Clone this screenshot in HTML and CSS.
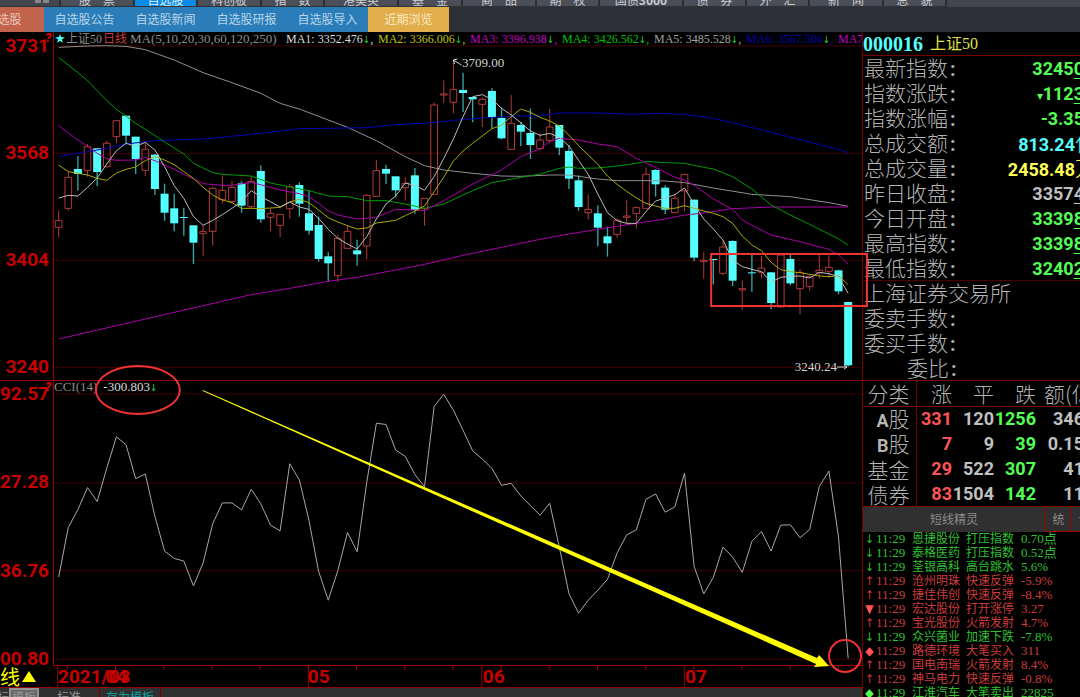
FILE: index.html
```html
<!DOCTYPE html>
<html lang="zh-CN">
<head>
<meta charset="utf-8">
<title>上证50 日线</title>
<link rel="stylesheet" href="styles.css">
</head>
<body>
<header class="menu">
  <button class="menu-item menu-grid" aria-label="应用"><i></i><i></i></button>
  <button class="menu-item w75">股　票</button>
  <button class="menu-item active">自选股</button>
  <button class="menu-item w64">科创板</button>
  <button class="menu-item">指　数</button>
  <button class="menu-item w75">港美英</button>
  <button class="menu-item w64">基　金</button>
  <button class="menu-item w75">商　品</button>
  <button class="menu-item">期　权</button>
  <button class="menu-item w84">国债<b>3000</b></button>
  <button class="menu-item">债　券</button>
  <button class="menu-item">外　汇</button>
  <button class="menu-item w75">新　闻</button>
  <button class="menu-item">总　貌</button>
</header>
<nav class="tabs">
  <a class="tab tab-first" href="#list">自选股</a>
  <a class="tab" href="#notice">自选股公告</a>
  <a class="tab" href="#news">自选股新闻</a>
  <a class="tab" href="#report">自选股研报</a>
  <a class="tab" href="#import">自选股导入</a>
  <a class="tab tab-recent" href="#recent">近期浏览</a>
</nav>
<main class="workspace">
  <section class="charts">
    <div class="axis axis-price"><span>3731</span><span>3568</span><span>3404</span><span>3240</span><b class="hint">?</b></div>
    <div class="plot">
      <svg class="canvas" id="price" viewBox="162 -24 2427 1044" preserveAspectRatio="none"></svg>
      <div class="legend">
        <span class="star">★</span><span class="gray">上证50</span><span class="day">日线</span><span class="gray params">MA(5,10,20,30,60,120,250)</span>
        <span class="c-white">MA1: 3352.476<em>↓</em>,</span>
        <span class="c-yellow">MA2: 3366.006<em>↓</em>,</span>
        <span class="c-magenta">MA3: 3396.938<em>↓</em>,</span>
        <span class="c-green">MA4: 3426.562<em>↓</em>,</span>
        <span class="c-gray">MA5: 3485.528<em>↓</em>,</span>
        <span class="c-blue">MA6: 3567.506<em>↓</em>,</span>
        <span class="c-magenta">MA7:</span>
      </div>
      <span class="mark mark-high">3709.00</span>
      <span class="mark mark-low">3240.24</span>
    </div>
    <div class="axis axis-cci"><span>92.57</span><span>27.28</span><span>36.76</span><span>00.80</span><b class="hint">?</b></div>
    <div class="plot plot-cci">
      <svg class="canvas" id="cci" viewBox="162 90 2427 855" preserveAspectRatio="none"></svg>
      <div class="cci-label"><span class="gray">CCI(14)</span><span class="c-white">-300.803<em>↓</em></span></div>
    </div>
    <button class="period">线<i></i></button>
    <div class="timeline">
      <svg class="canvas" id="ticks" viewBox="162 0 2427 66" preserveAspectRatio="none"></svg>
      <span class="month m-mar">2021/03</span><span class="month m-apr">04</span>
      <span class="month m-may">05</span><span class="month m-jun">06</span><span class="month m-jul">07</span>
    </div>
    <footer class="templates">
      <button class="tpl-prev">标</button><button class="tpl on">模板</button><button class="tpl tpl-std">标准</button><button class="tpl save">存为模板</button>
    </footer>
    <svg class="notes" viewBox="0 32 863 665" preserveAspectRatio="none">
      <rect x="712" y="254" width="156" height="52" class="note"/>
      <ellipse cx="138" cy="390" rx="42" ry="24" class="note"/>
      <circle cx="846" cy="656" r="16" class="note"/>
      <path class="trend" d="M203 390 L425 487 L818 658 L820 655 L830 666 L815 667 L817 664 L425 490 L203 391Z"/>
      <path class="lead" d="M454 60 L462 65 M454 60 l4 -1 M454 60 l1 4 M838 367 h10 M845 365 l3 2 l-3 2"/>
    </svg>
  </section>
  <aside class="panel">
    <h1 class="code">000016<small>上证50</small></h1>
    <dl class="quote">
      <div><dt>最新指数<b>:</b></dt><dd>3245<u>0</u></dd></div>
      <div><dt>指数涨跌<b>:</b></dt><dd><i class="down"></i>112<u>3</u></dd></div>
      <div><dt>指数涨幅<b>:</b></dt><dd>-3.35</dd></div>
      <div><dt>总成交额<b>:</b></dt><dd class="v-cyan">813.24<span class="unit">亿</span></dd></div>
      <div><dt>总成交量<b>:</b></dt><dd class="v-yellow">2458.48<span class="unit">万</span></dd></div>
      <div><dt>昨日收盘<b>:</b></dt><dd class="v-gray">3357<u>4</u></dd></div>
      <div><dt>今日开盘<b>:</b></dt><dd>3339<u>8</u></dd></div>
      <div><dt>最高指数<b>:</b></dt><dd>3339<u>8</u></dd></div>
      <div><dt>最低指数<b>:</b></dt><dd>3240<u>2</u></dd></div>
    </dl>
    <dl class="quote orders">
      <div><dt>上海证券交易所</dt></div>
      <div><dt>委卖手数<b>:</b></dt></div>
      <div><dt>委买手数<b>:</b></dt></div>
      <div><dt class="ratio">委比<b>:</b></dt></div>
    </dl>
    <table class="breadth">
      <colgroup><col class="k-name"><col class="k-up"><col class="k-mid"><col class="k-mid"><col></colgroup>
      <thead><tr><th>分类</th><th>涨</th><th>平</th><th>跌</th><th class="amount">额(亿</th></tr></thead>
      <tbody>
        <tr><th><b>A</b>股</th><td class="up">331</td><td>120</td><td class="dn">1256</td><td>346</td></tr>
        <tr><th><b>B</b>股</th><td class="up">7</td><td>9</td><td class="dn">39</td><td>0.15</td></tr>
        <tr><th>基金</th><td class="up">29</td><td>522</td><td class="dn">307</td><td>41</td></tr>
        <tr><th>债券</th><td class="up">83</td><td>1504</td><td class="dn">142</td><td>11</td></tr>
      </tbody>
    </table>
    <div class="wizard"><h2>短线精灵</h2><button>统</button><button>设</button></div>
    <ul class="alerts">
      <li class="g"><i>↓</i><span>11:29</span><span>恩捷股份</span><span>打压指数</span><span>0.70点</span></li>
      <li class="g"><i>↓</i><span>11:29</span><span>泰格医药</span><span>打压指数</span><span>0.52点</span></li>
      <li class="g"><i>↓</i><span>11:29</span><span>荃银高科</span><span>高台跳水</span><span>5.6%</span></li>
      <li><i>↑</i><span>11:29</span><span>沧州明珠</span><span>快速反弹</span><span>-5.9%</span></li>
      <li><i>↑</i><span>11:29</span><span>捷佳伟创</span><span>快速反弹</span><span>-8.4%</span></li>
      <li><i class="solid">▼</i><span>11:29</span><span>宏达股份</span><span>打开涨停</span><span>3.27</span></li>
      <li><i>↑</i><span>11:29</span><span>宝光股份</span><span>火箭发射</span><span>4.7%</span></li>
      <li class="g"><i>↓</i><span>11:29</span><span>众兴菌业</span><span>加速下跌</span><span>-7.8%</span></li>
      <li><i class="solid">◆</i><span>11:29</span><span>路德环境</span><span>大笔买入</span><span>311</span></li>
      <li><i>↑</i><span>11:29</span><span>国电南瑞</span><span>火箭发射</span><span>8.4%</span></li>
      <li><i>↑</i><span>11:29</span><span>神马电力</span><span>快速反弹</span><span>-0.8%</span></li>
      <li class="g"><i class="solid">◆</i><span>11:29</span><span>江淮汽车</span><span>大笔卖出</span><span>22825</span></li>
    </ul>
  </aside>
</main>
<script src="chart.js"></script>
</body>
</html>
```

FILE: styles.css
```css
* { box-sizing: border-box; }
body {
  margin: 0;
  height: 100vh;
  display: flex;
  flex-direction: column;
  overflow: hidden;
  background: #000;
  color: #b4b4b4;
  font: 12px/14px "Liberation Serif", "Noto Sans CJK SC", serif;
}
button { margin: 0; padding: 0; border: 0; background: none; color: inherit; font: inherit; }
dl, dd, ul, h1, h2 { margin: 0; padding: 0; font-weight: 400; }
em, i { font-style: normal; }

/* top menu, scrolled mostly out of view */
.menu {
  height: 7px;
  flex: none;
  display: flex;
  align-items: flex-end;
  overflow: hidden;
  background: #43464d;
}
.menu-item {
  flex: none;
  width: 63px;
  height: 28px;
  padding-top: 14px;
  border-right: 2px solid #2c2e33;
  border-bottom: 1px solid #303339;
  background: linear-gradient(#5b5f69, #484c55);
  color: #c9ccd2;
  font: 12px/12px "Noto Sans CJK SC", sans-serif;
}
.menu-grid { width: 61px; display: flex; gap: 2px; align-items: flex-end; justify-content: flex-end; padding: 0 10px 3px 0; background: #43464d; }
.menu-grid i { width: 6px; height: 12px; background: #85888e; }
.w64 { width: 64px; }
.w75 { width: 74px; }
.w84 { width: 84px; }
.menu-item.active { background: #0b8be8; color: #d8efff; }

.tabs { height: 25px; flex: none; display: flex; background: #2c2f33; overflow: hidden; }
.tab {
  flex: none;
  width: 81px;
  background: #2a7db8;
  color: #b9d6ea;
  text-align: center;
  text-decoration: none;
  font: 12px/24px "Noto Sans CJK SC", sans-serif;
}
.tab-first { margin-left: -37px; background: #c2644b; color: #ecc9bd; }
.tab-recent { background: #e2ad4b; color: #fbeac6; }

.workspace { flex: 1; min-height: 0; display: grid; grid-template-columns: minmax(0, 1fr) 218px; }

.charts {
  position: relative;
  min-height: 0;
  display: grid;
  grid-template-columns: 53px minmax(0, 1fr);
  grid-template-rows: minmax(0, 348fr) minmax(0, 285fr) 22px 10px;
}
.axis {
  position: relative;
  display: flex;
  flex-direction: column;
  justify-content: space-between;
  align-items: flex-end;
  padding-right: 4px;
  color: #c80000;
  font: 700 19px/22px Roboto, sans-serif;
}
.axis-price { padding-top: 3px; padding-bottom: 2px; }
.axis-cci { line-height: 12px; padding-top: 7px; border-top: 1px solid #a00000; }
.hint { position: absolute; right: 2px; top: 0; color: #f00000; font: italic 700 12px/12px Roboto, sans-serif; }
.plot { position: relative; border-left: 1px solid #a00000; overflow: hidden; }
.plot-cci { border-top: 1px solid #8c0000; }
.canvas { position: absolute; inset: 0; width: 100%; height: 100%; }
.legend {
  position: relative;
  display: grid;
  grid-template-columns: 11px 37px 27px 156px;
  grid-auto-columns: 92px;
  grid-auto-flow: column;
  padding-left: 1px;
  white-space: nowrap;
}
.params { font-size: 13px; }
.legend em, .cci-label em { color: #2ed03c; font-family: "DejaVu Sans Condensed", "DejaVu Sans", sans-serif; font-size: 10px; line-height: 12px; }
.star { color: #54ffff; font-size: 10px; }
.gray { color: #8c8c8c; }
.day { color: #c43c3c; }
.c-white { color: #dcdcdc; }
.c-yellow { color: #c0c000; }
.c-magenta { color: #c000c0; }
.c-green { color: #00c000; }
.c-gray { color: #a0a0a0; }
.c-blue { color: #0000b4; }
.mark { position: absolute; color: #d0d0d0; font-size: 13px; line-height: 14px; }
.mark-high { left: 50%; top: 7%; margin-left: 4px; }
.mark-low { right: 25px; bottom: 6px; }
.cci-label { position: relative; display: flex; gap: 6px; font-size: 13px; line-height: 12px; }

.period { display: flex; align-items: center; gap: 2px; color: #ffff00; font: 20px/21px "Noto Sans CJK SC", sans-serif; white-space: nowrap; overflow: hidden; }
.period i { border: 7px solid transparent; border-bottom: 11px solid #ffff00; border-top: 0; }
.timeline { position: relative; border-top: 1px solid #a00000; }
.month { position: absolute; color: #c80000; top: 0; font: 700 19px/22px Roboto, sans-serif; }
.m-mar { left: 5px; }
.m-apr { left: 6%; margin-left: 4px; }
.m-may { left: 31%; margin-left: 4px; }
.m-jun { left: 53%; margin-left: 1px; }
.m-jul { left: 78%; margin-left: 1px; }
.templates {
  grid-column: 1 / -1;
  display: flex;
  align-items: flex-start;
  overflow: hidden;
  background: #303030;
  border-top: 1px solid #900000;
  color: #969696;
  font: 12px/18px "Noto Sans CJK SC", sans-serif;
}
.tpl-prev { width: 9px; display: flex; justify-content: flex-end; }
.tpl { border-right: 1px solid #780000; }
.tpl.on { width: 30px; background: #686868; border: 2px solid #929292; line-height: 14px; }
.tpl-std { width: 61px; }
.save { width: 61px; color: #109c9c; }

.notes { position: absolute; inset: 0; width: 100%; height: 100%; overflow: visible; pointer-events: none; z-index: 2; }
.note { fill: none; stroke: #f03232; stroke-width: 2; }
.trend { fill: #ffff00; }
.lead { fill: none; stroke: #d8d8d8; stroke-width: 1; }

.panel { min-height: 0; border-left: 1px solid #780000; overflow: hidden; font-family: "Noto Sans CJK SC", sans-serif; }
.code {
  height: 24px;
  border-bottom: 1px solid #780000;
  color: #54ffff;
  font: 700 20px/25px "Liberation Serif", serif;
  display: flex;
  gap: 7px;
}
.code small { color: #e0e040; font: 16px/24px "Liberation Serif", "Noto Sans CJK SC", serif; }
.quote { width: 221px; border-bottom: 1px solid #500000; }
.quote div { display: flex; justify-content: space-between; height: 25px; padding-left: 1px; white-space: nowrap; }
.quote div:last-child { height: 24px; }
.quote dt, .breadth th { color: #b4b4b4; font-size: 21px; line-height: 23px; font-weight: 300; }
.quote dt b { font: 700 20px/23px Roboto, sans-serif; margin-left: 2px; }
.quote dd { color: #54ff54; font: 700 18px/26px Roboto, sans-serif; }
.quote .v-cyan { color: #54ffff; margin-right: -12px; }
.quote .v-yellow { color: #ffff54; margin-right: -12px; }
.quote .v-cyan, .quote .v-yellow { line-height: 23px; }
.quote .v-gray { color: #c0c0c0; }
.quote u { text-underline-offset: 3px; }
.unit { font: 300 21px/23px "Noto Sans CJK SC", sans-serif; }
.down { display: inline-block; border: 3px solid transparent; border-top: 6px solid #54ff54; border-bottom: 0; }
.orders { border-color: #780000; }
.orders .ratio { margin-left: 43px; }

.breadth { width: 221px; table-layout: fixed; border-collapse: collapse; }
.breadth th, .breadth td { height: 25px; padding: 0; text-align: right; white-space: nowrap; }
.breadth th { line-height: 22px; }
.breadth td { color: #c0c0c0; font: 700 18px/22px Roboto, sans-serif; direction: rtl; unicode-bidi: plaintext; }
.breadth th:first-child { padding-right: 6px; border-right: 1px solid #780000; }
.breadth th b { font: 700 18px/18px Roboto, sans-serif; }
.breadth thead th { border-bottom: 1px solid #780000; }
.breadth .amount { text-align: left; padding-left: 8px; }
.breadth .up { color: #ff5454; }
.breadth .dn { color: #54ff54; }
.k-name { width: 53px; }
.k-up { width: 36px; }
.k-mid { width: 42px; }

.wizard { display: grid; grid-template-columns: 182px 26px 26px; height: 26px; border-top: 1px solid #780000; background: #303030; color: #8c8c8c; }
.wizard h2, .wizard button { font: 12px/24px "Noto Sans CJK SC", sans-serif; text-align: center; }
.wizard button { border-left: 1px solid #a00000; border-bottom: 1px solid #a00000; }

.alerts { list-style: none; color: #cc3c3c; font: 12px/14px "Liberation Serif", "Noto Sans CJK SC", serif; }
.alerts li { display: grid; grid-template-columns: 13px 36px 54px 55px 1fr; height: 14px; white-space: nowrap; }
.alerts span:nth-child(2) { font-size: 13px; }
.alerts span:last-child { font-size: 13px; }
.alerts .g { color: #30c030; }
.alerts i { text-align: center; font: 12px/14px "DejaVu Sans Condensed", "DejaVu Sans", sans-serif; }
.alerts .solid { color: #ff5454; }
.alerts .g .solid { color: #54ff54; }

.grid { stroke: #420000; stroke-width: 3; }
.tick { stroke: #a00000; stroke-width: 3; }
.line { fill: none; stroke-width: 3; stroke-linejoin: round; }
.fall { fill: #54ffff; stroke: none; }
.fall-wick { stroke: #35a8a8; stroke-width: 4; }
.rise { fill: none; stroke: #b43a3a; stroke-width: 3; }
```

FILE: chart.js
```js
const NS = "http://www.w3.org/2000/svg";
const X0 = 176, STEP = 28.92;
const xAt = k => X0 + k * STEP;

function add(svg, tag, attrs) {
  const el = document.createElementNS(NS, tag);
  for (const name in attrs) el.setAttribute(name, attrs[name]);
  svg.appendChild(el);
}
function series(svg, points, color) {
  add(svg, "polyline", { class: "line", stroke: color, points: points.map(p => xAt(p[0]) + "," + p[1]).join(" ") });
}
const pairs = text => text.split(" ").map(p => p.split(",").map(Number));

// direction (r rise, c fall), body top, body bottom, high, low
const candles = `r 542 562 512 592|r 412 505 395 512|c 387 402 348 452|r 320 391 312 410|c 325 396 325 438|r 310 380 302 382
r 242 290 242 310|c 227 287 227 312|c 290 357 290 402|r 328 391 310 408|c 344 447 342 465|c 461 518 431 542|c 505 550 461 574
c 531 534 503 587|c 556 608 556 672|r 575 581 556 649|r 445 574 442 617|r 451 479 406 490|r 442 485 422 490|c 430 497 424 518
r 424 500 408 505|c 393 538 376 548|r 520 532 505 573|r 523 556 523 591|r 440 506 432 536|c 435 491 427 530|c 520 572 452 584
c 555 657 530 665|c 649 670 637 725|r 595 707 584 725|r 574 625 556 625|c 631 643 599 677|r 466 618 462 657|r 392 469 360 469
c 387 401 374 432|c 409 451 409 472|r 430 443 412 482|c 406 510 384 521|r 475 506 475 557|r 195 463 187 463|r 162 165 121 189
r 148 187 60 220|c 150 159 98 216|c 171 178 171 247|r 178 193 172 261|c 153 231 145 266|c 234 295 202 298|r 250 328 165 328
c 255 275 246 318|c 279 315 206 357|r 300 326 278 332|r 261 301 207 310|c 255 323 255 345|c 333 416 315 447|c 421 501 406 512
r 508 518 464 538|c 520 563 496 619|c 589 610 560 650|r 541 583 535 593|r 528 532 480 553|r 503 520 499 566|r 403 505 383 505
c 390 433 387 470|c 443 509 436 522|r 475 518 463 518|r 403 453 403 513|c 479 653 479 664|r 661 665 637 716|c 657 660 657 733
r 621 700 602 706|c 603 722 601 738|r 746 750 721 809|c 697 700 642 755|r 684 697 648 714|c 697 789 697 808|r 645 801 645 801
c 657 730 643 736|r 697 746 687 823|r 710 740 704 752|r 691 698 643 716|r 682 694 646 713|c 691 754 689 763|c 786 976 786 980`
  .split(/[|\n]/).map(s => s.split(" "));

const price = document.getElementById("price");
[18, 340, 661, 982].forEach(y => add(price, "line", { class: "grid", x1: 156, x2: 2589, y1: y, y2: y }));
candles.forEach(([dir, ...v], k) => {
  const [top, bottom, high, low] = v.map(Number), x = xAt(k);
  if (dir === "c") {
    add(price, "line", { class: "fall-wick", x1: x, x2: x, y1: high, y2: low });
    add(price, "rect", { class: "fall", x: x - 12, y: top, width: 24, height: bottom - top });
  } else {
    add(price, "path", { class: "rise", d: `M${x} ${high}V${top}M${x} ${bottom}V${low}M${x - 10} ${top}h20V${bottom}h-20Z` });
  }
});

series(price, pairs("0,22 3,18 5,17 7,19 9,29 12,60 15,98 18,128 21,160 23,190 25,207 28,240 30,262 33,302 36,350 38,377 40,390 43,400 46,408 48,409 51,405 53,405 56,417 58,422 61,422 63,423 65,428 68,444 72,463 76,470 80,488 82,499"), "#909090");
series(price, pairs("0,349 3,335 5,325 7,312 10,302 12,300 15,297 20,283 25,266 28,265 32,263 35,254 38,250 41,241 44,234 47,229 50,227 52,219 56,219 60,223 62,220 65,223 68,235 70,248 74,277 78,306 81,328 82,339"), "#0000b8");
series(price, pairs("0,897 9,837 18,777 20,764 24,745 28,724 31,712 35,690 38,673 42,646 46,622 50,598 53,582 56,568 60,550 63,537 65,525 67,519 70,506 74,501 82,501"), "#a800a8");
series(price, pairs("0,52 1,75 2,98 3,122 4,152 5,182 6,208 7,228 8,250 9,268 11,306 13,342 14,370 16,398 17,403 20,408 22,429 24,441 26,452 28,468 30,470 32,482 34,482 36,492 38,505 40,492 43,452 45,428 48,412 50,402 52,385 53,381 54,385 56,384 58,378 60,370 61,364 63,368 65,370 67,382 68,387 70,410 72,447 74,495 76,525 78,553 80,582 81,596 82,616"), "#009c00");
series(price, pairs("0,257 2,300 3,318 4,340 5,356 6,361 8,360 9,352 10,362 12,388 14,417 15,431 17,436 18,436 20,427 22,442 23,450 25,461 26,470 27,490 28,512 29,525 31,537 33,532 35,508 37,510 38,512 40,482 43,432 46,390 48,350 50,326 51,305 52,295 54,300 56,312 58,320 60,355 62,382 64,412 65,420 66,436 68,477 70,508 71,540 72,556 74,585 77,605 80,628 81,645 82,673"), "#a800a8");
series(price, pairs("0,375 1,395 2,400 3,405 4,415 5,421 6,399 7,388 8,381 9,362 10,350 11,360 12,374 13,395 14,415 15,442 16,465 17,480 18,488 19,505 20,505 21,506 22,504 23,502 24,486 25,478 26,488 27,510 28,533 29,546 30,557 31,567 32,564 33,549 34,545 35,541 36,527 37,513 38,498 39,455 40,411 41,363 42,333 43,310 44,288 45,266 46,256 47,230 48,207 49,217 50,232 51,243 52,258 53,285 54,317 55,345 56,373 57,408 58,433 59,454 60,474 61,490 62,498 63,505 64,505 65,497 66,505 67,513 68,520 69,530 70,550 71,588 72,615 73,632 74,667 75,689 76,695 77,698 78,703 79,708 80,710 81,707 82,734"), "#aaaa00");
const ma5 = [474,466,468,442,414,372,332,310,319,307,330,380,437,475,530,556,541,524,505,484,452,470,485,501,486,501,508,535,568,595,612,627,590,537,492,468,429,436,451,410,355,297,230,170,164,178,205,225,248,273,286,280,292,318,361,403,462,518,542,550,550,515,483,474,464,444,492,537,567,600,660,680,688,695,726,712,709,708,714,697,701,710,760];
series(price, ma5.map((y, k) => [k, y]), "#bcbcbc");

const cci = document.getElementById("cci");
[129, 397, 661, 928].forEach(y => add(cci, "line", { class: "grid", x1: 156, x2: 2589, y1: y, y2: y }));
const cciData = [680,531,477,411,453,352,258,282,384,370,498,602,624,632,707,638,520,457,457,478,416,460,524,541,339,388,510,663,750,660,546,604,395,217,221,298,317,372,408,167,130,178,238,300,325,353,404,398,436,465,494,458,590,730,789,750,720,687,608,553,538,446,430,485,469,367,648,731,681,590,620,666,573,543,602,524,523,562,537,408,361,560,925];
series(cci, cciData.map((y, k) => [k, y]), "#a8a8a8");

const ticks = document.getElementById("ticks");
for (let k = 1; k <= 82; k += 5) add(ticks, "line", { class: "tick", x1: xAt(k), x2: xAt(k), y1: 0, y2: 13 });
[0, 26, 44, 65].forEach(k => add(ticks, "line", { class: "tick", x1: xAt(k), x2: xAt(k), y1: 0, y2: 66 }));
```
